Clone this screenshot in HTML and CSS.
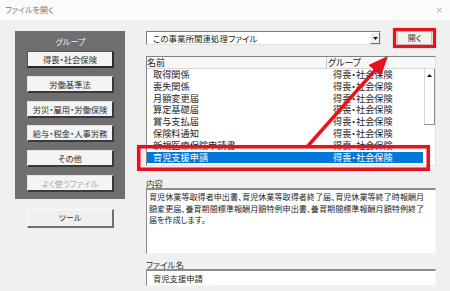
FILE: index.html
```html
<!DOCTYPE html>
<html lang="ja">
<head>
<meta charset="utf-8">
<title>ファイルを開く</title>
<link rel="stylesheet" href="styles.css">
</head>
<body>
<div class="titlebar"><span class="title">ファイルを開く</span><span class="close">×</span></div>
<div class="main">
  <div class="side">
    <div class="groups">
      <div class="groups-label">グループ</div>
      <div class="gbtn active">得喪・社会保険</div>
      <div class="gbtn">労働基準法</div>
      <div class="gbtn">労災・雇用・労働保険</div>
      <div class="gbtn">給与・税金・人事労務</div>
      <div class="gbtn">その他</div>
      <div class="gbtn disabled">よく使うファイル</div>
    </div>
    <div class="tool">ツール</div>
  </div>
  <div class="content">
    <div class="toprow">
      <div class="combo"><span class="combo-text">この事業所関連処理ファイル</span><span class="combo-arrow"><svg width="5" height="3" viewBox="0 0 5 3"><path d="M0 0H5L2.5 3Z" fill="#111"/></svg></span></div>
      <div class="open">開く</div>
    </div>
    <div class="list">
      <div class="list-head"><div class="hname">名前</div><div class="hgroup">グループ</div></div>
      <div class="list-body">
        <div class="rows">
          <div class="row"><span class="cname">取得関係</span><span class="cgroup">得喪・社会保険</span></div>
          <div class="row"><span class="cname">喪失関係</span><span class="cgroup">得喪・社会保険</span></div>
          <div class="row"><span class="cname">月額変更届</span><span class="cgroup">得喪・社会保険</span></div>
          <div class="row"><span class="cname">算定基礎届</span><span class="cgroup">得喪・社会保険</span></div>
          <div class="row"><span class="cname">賞与支払届</span><span class="cgroup">得喪・社会保険</span></div>
          <div class="row"><span class="cname">保険料通知</span><span class="cgroup">得喪・社会保険</span></div>
          <div class="row"><span class="cname">新規医療保険申請書</span><span class="cgroup">得喪・社会保険</span></div>
          <div class="row selected"><span class="cname">育児支援申請</span><span class="cgroup">得喪・社会保険</span></div>
        </div>
        <div class="scrollbar"><svg width="5" height="3" viewBox="0 0 5 3"><path d="M0 3H5L2.5 0Z" fill="#111"/></svg></div>
      </div>
    </div>
    <div class="label first">内容</div>
    <div class="desc">育児休業等取得者申出書、育児休業等取得者終了届、育児休業等終了時報酬月<br>額変更届、養育期間標準報酬月額特例申出書、養育期間標準報酬月額特例終了<br>届を作成します。</div>
    <div class="label second">ファイル名</div>
    <div class="filename">育児支援申請</div>
  </div>
</div>
<svg class="annot" width="450" height="291" viewBox="0 0 450 291">
  <rect x="394.5" y="29.5" width="40" height="17" fill="none" stroke="#e5141c" stroke-width="3.2"/>
  <rect x="138.75" y="146.75" width="289.5" height="22.5" fill="none" stroke="#e5141c" stroke-width="3.6"/>
  <line x1="306.5" y1="147.5" x2="377" y2="68" stroke="#e5141c" stroke-width="3.4"/>
  <polygon points="388,56 381,76 368.5,65" fill="#e5141c"/>
</svg>
</body>
</html>
```

FILE: styles.css
```css
* { box-sizing: border-box; margin: 0; padding: 0; }
html, body { width: 450px; height: 291px; overflow: hidden; }
body {
  background: #f0f0f0;
  font-family: "Noto Sans CJK JP", "Noto Sans", sans-serif;
  font-feature-settings: "palt";
  color: #1e1e1e;
  position: relative;
}
.titlebar {
  height: 20px;
  background: #fbfbfb;
  display: flex;
  align-items: center;
  justify-content: space-between;
  padding: 0 7px 0 5px;
}
.title { font-size: 8px; line-height: 10px; color: #7a7a7a; }
.close { font-family: "DejaVu Sans", sans-serif; font-size: 9px; line-height: 10px; color: #b0b0b0; }
.main { display: flex; gap: 21px; padding: 11px 0 0 15px; }
.side { width: 110px; display: flex; flex-direction: column; }
.groups { height: 168px; background: #6f6f6f; padding: 5px 0 0 12px; }
.groups-label {
  width: 87px; text-align: center; color: #f0f0f0;
  font-size: 8px; line-height: 12px; margin-bottom: 3px;
}
.gbtn {
  width: 87px; height: 17px; margin-bottom: 7.8px;
  background: #f4f4f4;
  border-style: solid; border-width: 1px 2px 2px 1px;
  border-color: #e4e4e4 #3a3a3a #3a3a3a #e4e4e4;
  font-size: 8.3px; line-height: 14px; text-align: center; color: #2c2c2c;
}
.gbtn.active { border-color: #555 #2a2a2a #2a2a2a #555; }
.gbtn.disabled { color: #a9a9a9; }
.tool {
  margin: 10px 0 0 12px; width: 87px; height: 19px;
  background: #f0f0f0;
  border-style: solid; border-width: 1px 2px 2px 1px;
  border-color: #fafafa #707070 #707070 #fafafa;
  font-size: 8px; line-height: 16px; text-align: center; color: #2c2c2c;
}
.content { width: 290px; display: flex; flex-direction: column; }
.toprow { display: flex; height: 14px; }
.combo {
  width: 235px; height: 14px; background: #fff;
  border: 1px solid; border-color: #7a7a7a #e2e2e2 #e2e2e2 #7a7a7a;
  display: flex; align-items: stretch;
}
.combo-text { flex: 1; font-size: 8.5px; line-height: 12px; padding-left: 6px; color: #1e1e1e; }
.combo-arrow {
  width: 10px; background: #f0f0f0;
  border-style: solid; border-width: 1px; border-color: #fff #6a6a6a #6a6a6a #fff;
  display: flex; align-items: center; justify-content: center;
}
.open {
  margin-left: 16px; width: 35px; height: 14px;
  background: #f2f2f2; border: 1px solid #c4c4c4;
  font-size: 8px; line-height: 12px; text-align: center; color: #2c2c2c;
}
.list {
  margin-top: 11px; height: 110px; background: #fff;
  border: 1px solid; border-color: #828282 #e0e0e0 #e0e0e0 #828282;
}
.list-head {
  display: flex; height: 12px; background: #f7f7f7;
  border-bottom: 1px solid #d8d8d8;
  font-size: 9px; line-height: 11px; color: #1e1e1e;
}
.hname { width: 180px; border-right: 1px solid #c8c8c8; }
.hgroup { flex: 1; padding-left: 1px; }
.list-body { display: flex; }
.rows { width: 276px; }
.row { display: flex; height: 11.8px; font-size: 9.2px; line-height: 11.8px; color: #1e1e1e; }
.row.selected { background: #0078d7; color: #fff; }
.cname { display: block; width: 180px; padding-left: 6px; white-space: nowrap; }
.cgroup { display: block; flex: 1; padding-left: 6px; white-space: nowrap; }
.scrollbar {
  width: 11px; height: 56px; margin-left: 1px;
  border-style: solid; border-width: 0 1px 1px 1px;
  border-color: #d0d0d0 #8a8a8a #8a8a8a #d6d6d6;
  display: flex; justify-content: center; padding-top: 5px;
}
.scrollbar svg { display: block; }
.label { font-size: 8.5px; line-height: 9px; color: #333; }
.label.first { margin-top: 13px; }
.label.second { margin-top: 6px; }
.desc {
  height: 66px; background: #fff;
  border-style: solid; border-width: 2px 1px 1px 1px;
  border-color: #8c8c8c #f6f6f6 #f6f6f6 #8c8c8c;
  padding: 1px 0 0 2px;
  font-size: 8.1px; line-height: 11.5px; color: #1e1e1e; white-space: nowrap;
}
.filename {
  height: 17px; background: #fff;
  border-style: solid; border-width: 2px 1px 1px 1px;
  border-color: #8c8c8c #f6f6f6 #f6f6f6 #8c8c8c;
  padding-left: 6px;
  font-size: 8.3px; line-height: 14px; color: #1e1e1e;
}
.annot { position: absolute; left: 0; top: 0; pointer-events: none; }
```
